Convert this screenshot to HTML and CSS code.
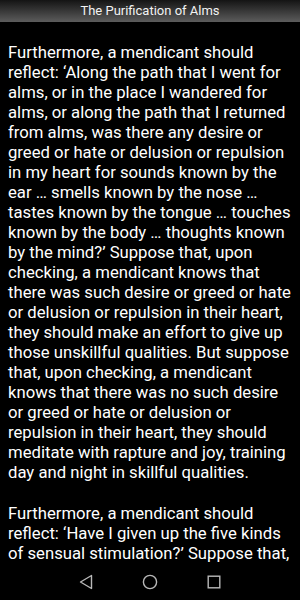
FILE: index.html
```html
<!DOCTYPE html>
<html lang="en">
<head>
    <meta charset="UTF-8">
    <meta name="viewport" content="width=device-width, initial-scale=1.0">
    <title>The Purification of Alms</title>
    <link rel="stylesheet" href="styles.css">
</head>
<body>
    <div class="screen">
        <div class="title-bar">The Purification of Alms</div>
        <div class="reader">
            <p>Furthermore, a mendicant should reflect: ‘Along the path that I went for alms, or in the place I wandered for alms, or along the path that I returned from alms, was there any desire or greed or hate or delusion or repulsion in my heart for sounds known by the ear … smells known by the nose … tastes known by the tongue … touches known by the body … thoughts known by the mind?’ Suppose that, upon checking, a mendicant knows that there was such desire or greed or hate or delusion or repulsion in their heart, they should make an effort to give up those unskillful qualities. But suppose that, upon checking, a mendicant knows that there was no such desire or greed or hate or delusion or repulsion in their heart, they should meditate with rapture and joy, training day and night in skillful qualities.</p>
            <p>Furthermore, a mendicant should reflect: ‘Have I given up the five kinds of sensual stimulation?’ Suppose that, upon checking, a mendicant knows that they have not given up the five kinds of sensual stimulation, they should make an effort to give them up.</p>
        </div>
        <div class="nav-bar">
            <svg class="nav-icon" width="14" height="16" viewBox="0 0 14 16">
                <path d="M12.5 1.5 L1.5 8 L12.5 14.5 Z" fill="none" stroke="currentColor" stroke-width="1.4" stroke-linejoin="round"/>
            </svg>
            <svg class="nav-icon" width="16" height="16" viewBox="0 0 16 16">
                <circle cx="8" cy="8" r="6.6" fill="none" stroke="currentColor" stroke-width="1.4"/>
            </svg>
            <svg class="nav-icon" width="14" height="14" viewBox="0 0 14 14">
                <rect x="1.2" y="1.2" width="11.6" height="11.6" fill="none" stroke="currentColor" stroke-width="1.4"/>
            </svg>
        </div>
    </div>
</body>
</html>
```

FILE: styles.css
```css
body {
    margin: 0;
    background-color: #000;
    font-family: 'Roboto', 'Noto Sans', sans-serif;
    color: #fff;
}
.screen {
    display: flex;
    flex-direction: column;
    height: 600px;
    overflow: hidden;
}
.title-bar {
    height: 22px;
    line-height: 22px;
    text-align: center;
    font-size: 13px;
    color: #f2f2f2;
    background: linear-gradient(to bottom, #141414, #5c5c5c);
}
.reader {
    flex: 1;
    overflow: hidden;
    padding: 21px 8px 0 8px;
}
.reader p {
    margin: 0 0 21px 0;
    font-size: 16.7px;
    line-height: 20px;
}
.nav-bar {
    height: 35px;
    display: flex;
    align-items: center;
    justify-content: center;
    gap: 49px;
    background-color: #000;
    color: #b8b8b8;
    padding-bottom: 1px;
}
.nav-icon {
    display: block;
}
```
